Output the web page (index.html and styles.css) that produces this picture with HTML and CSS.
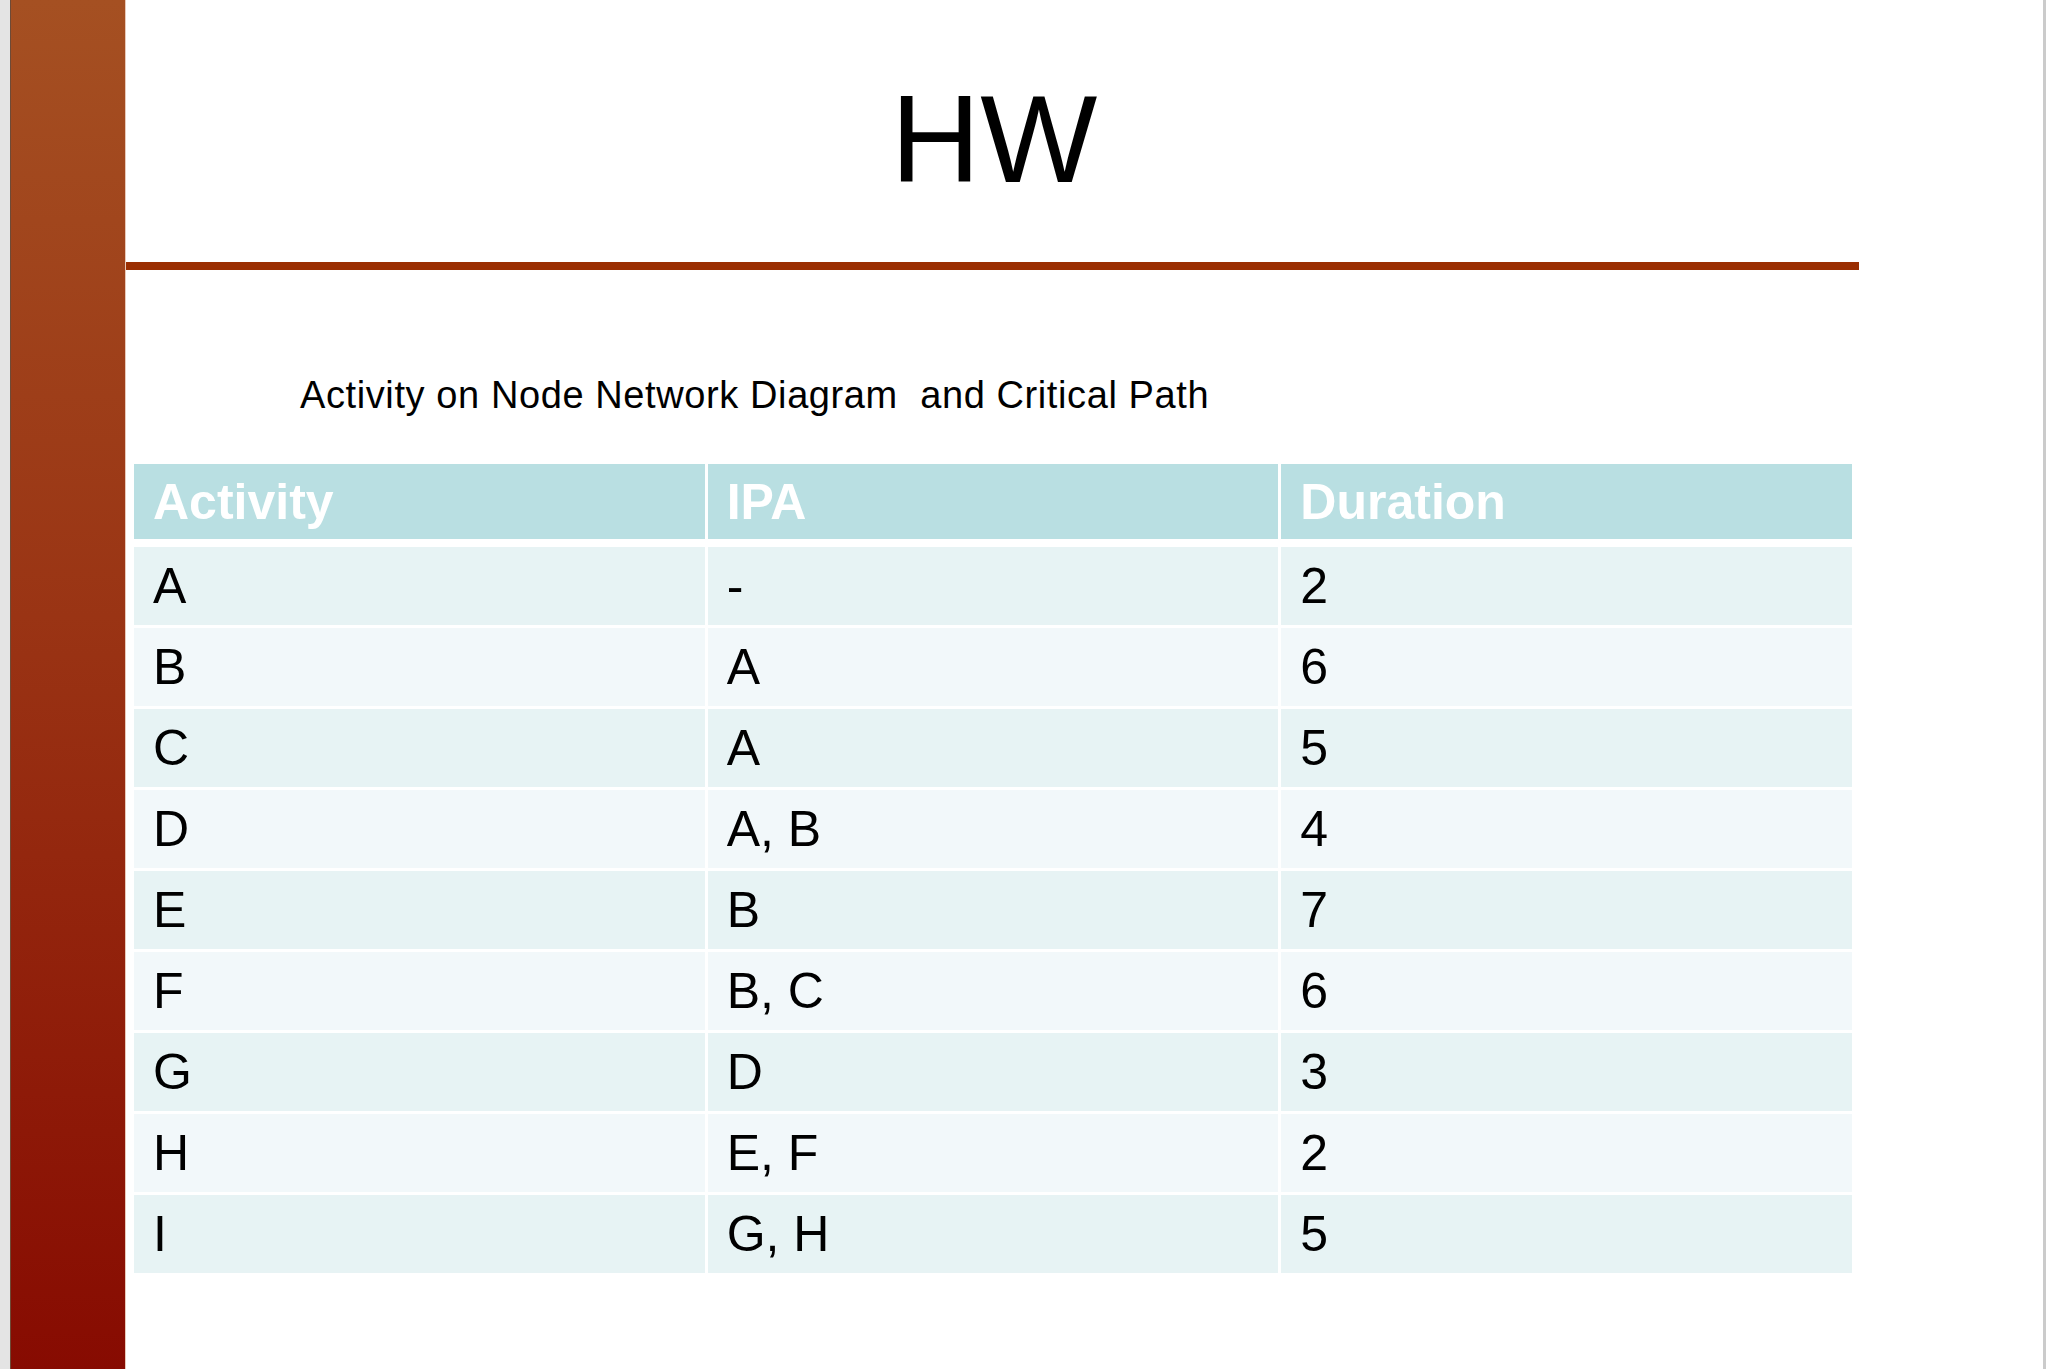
FILE: index.html
```html
<!DOCTYPE html>
<html lang="en">
<head>
<meta charset="utf-8">
<title>HW</title>
<link rel="stylesheet" href="styles.css">
</head>
<body>
<div class="screen">
  <div class="gutter"></div>
  <div class="sidebar"></div>
  <main class="slide">
    <h1 class="title">HW</h1>
    <div class="rule"></div>
    <p class="subtitle">Activity on Node Network Diagram&nbsp; and Critical Path</p>
    <div class="table">
      <div class="cell head">Activity</div>
      <div class="cell head">IPA</div>
      <div class="cell head">Duration</div>

      <div class="cell odd">A</div><div class="cell odd">-</div><div class="cell odd">2</div>
      <div class="cell even">B</div><div class="cell even">A</div><div class="cell even">6</div>
      <div class="cell odd">C</div><div class="cell odd">A</div><div class="cell odd">5</div>
      <div class="cell even">D</div><div class="cell even">A, B</div><div class="cell even">4</div>
      <div class="cell odd">E</div><div class="cell odd">B</div><div class="cell odd">7</div>
      <div class="cell even">F</div><div class="cell even">B, C</div><div class="cell even">6</div>
      <div class="cell odd">G</div><div class="cell odd">D</div><div class="cell odd">3</div>
      <div class="cell even">H</div><div class="cell even">E, F</div><div class="cell even">2</div>
      <div class="cell odd">I</div><div class="cell odd">G, H</div><div class="cell odd">5</div>
    </div>
  </main>
  <div class="edge"></div>
</div>
</body>
</html>
```

FILE: styles.css
```css
html, body {
  margin: 0;
  padding: 0;
  background: #ffffff;
}

body {
  font-family: "Liberation Sans", Arial, sans-serif;
  color: #000000;
}

.screen {
  display: flex;
  width: 2046px;
  height: 1369px;
  overflow: hidden;
}

.gutter {
  width: 10px;
  flex: none;
  background: #e4e4e4;
}

.sidebar {
  width: 114px;
  flex: none;
  border-left: 1px solid #6e4a36;
  border-right: 1px solid #e9c9b9;
  background: linear-gradient(to bottom, #a55022 0%, #9a3414 45%, #870b01 100%);
}

.slide {
  flex: 1;
  padding-top: 77px;
}

.title {
  width: 1736px;
  margin: 0;
  font-size: 124px;
  line-height: 124px;
  font-weight: normal;
  text-align: center;
}

.rule {
  width: 1733px;
  height: 8px;
  margin-top: 61px;
  background: #9a2e02;
}

.subtitle {
  margin: 103px 0 0 174px;
  font-size: 38px;
  line-height: 44px;
  letter-spacing: 0.6px;
}

.table {
  width: 1718px;
  margin: 47px 0 0 8px;
  display: grid;
  grid-template-columns: repeat(3, 1fr);
  column-gap: 3px;
  row-gap: 3px;
}

.cell {
  display: flex;
  align-items: center;
  height: 78px;
  padding-left: 19px;
  font-size: 50px;
}

.cell.head {
  height: 75px;
  margin-bottom: 5px;
  background: #b9dfe2;
  color: #ffffff;
  font-weight: bold;
}

.cell.odd {
  background: #e7f3f4;
}

.cell.even {
  background: #f2f8fa;
}

.edge {
  width: 3px;
  flex: none;
  background: #cbcbcb;
}
```
